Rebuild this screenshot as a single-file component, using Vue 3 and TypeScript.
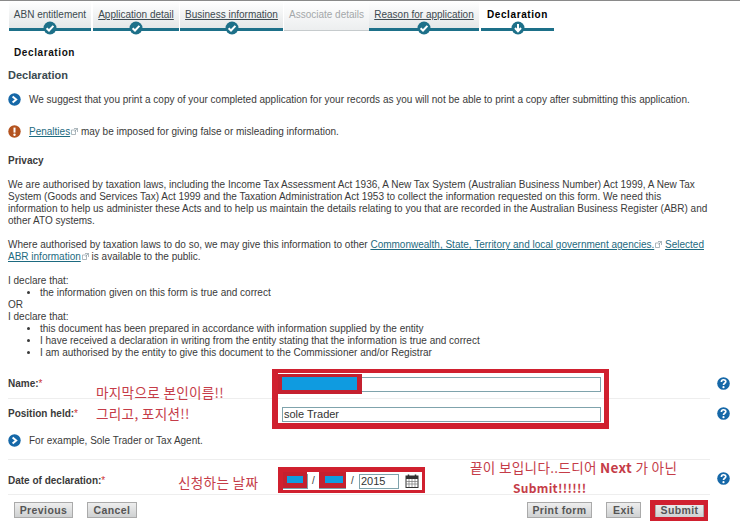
<script setup lang="ts">
interface Step {
  label: string;
  width: number;
  gap: number;
  state: 'done' | 'plain' | 'disabled' | 'current';
}

const steps: Step[] = [
  { label: 'ABN entitlement', width: 82, gap: 2, state: 'plain' },
  { label: 'Application detail', width: 86, gap: 1, state: 'done' },
  { label: 'Business information', width: 103, gap: 1, state: 'done' },
  { label: 'Associate details', width: 85, gap: 0, state: 'disabled' },
  { label: 'Reason for application', width: 110, gap: 2, state: 'done' },
  { label: 'Declaration', width: 73, gap: 0, state: 'current' },
];
</script>

<template>
  <div class="page">
    <nav class="steps">
      <div
        v-for="step in steps"
        :key="step.label"
        class="step"
        :class="step.state"
        :style="{ width: step.width + 'px', marginRight: step.gap + 'px' }"
      >
        <span class="step-label">{{ step.label }}</span>
        <svg v-if="step.state !== 'disabled'" class="step-icon" viewBox="0 0 14 14" width="14" height="14">
          <circle cx="7" cy="7" r="6.5" fill="#1d7089" />
          <path v-if="step.state === 'current'" d="M7 3v7M4 7l3 3.2L10 7" fill="none" stroke="#fff" stroke-width="2" />
          <path v-else d="M3.6 7.2l2.4 2.3 4.4-4.6" fill="none" stroke="#fff" stroke-width="2" />
        </svg>
      </div>
    </nav>

    <div class="page-title">Declaration</div>

    <main class="content">
      <h2 class="section-title">Declaration</h2>

      <div class="note first">
        <svg class="note-icon" viewBox="0 0 13 13" width="13" height="13">
          <circle cx="6.5" cy="6.5" r="6.2" fill="#1668a8" />
          <path d="M4.6 3.4l3.6 3.1-3.6 3.1" fill="none" stroke="#fff" stroke-width="2" />
        </svg>
        <span>We suggest that you print a copy of your completed application for your records as you will not be able to print a copy after submitting this application.</span>
      </div>

      <div class="note second">
        <svg class="note-icon" viewBox="0 0 13 13" width="13" height="13">
          <circle cx="6.5" cy="6.5" r="6.2" fill="#b4531f" />
          <path d="M6.5 2.6v5" fill="none" stroke="#fff" stroke-width="2" />
          <circle cx="6.5" cy="9.8" r="1.2" fill="#fff" />
        </svg>
        <span><a class="link">Penalties</a><svg class="ext" viewBox="0 0 7 7" width="7" height="7"><path d="M.5 2h4v4.5h-4zM3 .5h3.5V4M6.5.5L3.5 3.5" fill="none" stroke="#8a9aa0" stroke-width=".7" /></svg> may be imposed for giving false or misleading information.</span>
      </div>

      <h3 class="sub-title">Privacy</h3>

      <p class="para">We are authorised by taxation laws, including the Income Tax Assessment Act 1936, A New Tax System (Australian Business Number) Act 1999, A New Tax<br />System (Goods and Services Tax) Act 1999 and the Taxation Administration Act 1953 to collect the information requested on this form. We need this<br />information to help us administer these Acts and to help us maintain the details relating to you that are recorded in the Australian Business Register (ABR) and<br />other ATO systems.</p>

      <p class="para">Where authorised by taxation laws to do so, we may give this information to other <a class="link">Commonwealth, State, Territory and local government agencies.</a><svg class="ext" viewBox="0 0 7 7" width="7" height="7"><path d="M.5 2h4v4.5h-4zM3 .5h3.5V4M6.5.5L3.5 3.5" fill="none" stroke="#8a9aa0" stroke-width=".7" /></svg> <a class="link">Selected</a><br /><a class="link">ABR information</a><svg class="ext" viewBox="0 0 7 7" width="7" height="7"><path d="M.5 2h4v4.5h-4zM3 .5h3.5V4M6.5.5L3.5 3.5" fill="none" stroke="#8a9aa0" stroke-width=".7" /></svg> is available to the public.</p>

      <div class="para">
        I declare that:
        <ul>
          <li>the information given on this form is true and correct</li>
        </ul>
        OR<br />
        I declare that:
        <ul>
          <li>this document has been prepared in accordance with information supplied by the entity</li>
          <li>I have received a declaration in writing from the entity stating that the information is true and correct</li>
          <li>I am authorised by the entity to give this document to the Commissioner and/or Registrar</li>
        </ul>
      </div>

      <div class="form">
        <div class="row name-row">
          <label class="field-label">Name:<em>*</em></label>
          <input class="field" type="text" />
          <svg class="help" viewBox="0 0 13 13" width="13" height="13"><circle cx="6.5" cy="6.5" r="6.3" fill="#1668a8" /><path d="M4.4 5c0-3 4.4-2.8 4.4-.4 0 1.600-2.300 1.700-2.300 3.300" fill="none" stroke="#fff" stroke-width="1.700" /><circle cx="6.500" cy="10.200" r="1.100" fill="#fff" /></svg>
        </div>
        <div class="row position-row">
          <label class="field-label">Position held:<em>*</em></label>
          <input class="field" type="text" value="sole Trader" />
          <svg class="help" viewBox="0 0 13 13" width="13" height="13"><circle cx="6.5" cy="6.5" r="6.3" fill="#1668a8" /><path d="M4.4 5c0-3 4.4-2.8 4.4-.4 0 1.600-2.300 1.700-2.300 3.300" fill="none" stroke="#fff" stroke-width="1.700" /><circle cx="6.500" cy="10.200" r="1.100" fill="#fff" /></svg>
        </div>
        <div class="note example">
          <svg class="note-icon" viewBox="0 0 13 13" width="13" height="13">
            <circle cx="6.5" cy="6.5" r="6.2" fill="#1668a8" />
            <path d="M4.6 3.4l3.600 3.100-3.600 3.100" fill="none" stroke="#fff" stroke-width="2" />
          </svg>
          <span>For example, Sole Trader or Tax Agent.</span>
        </div>
        <div class="row date-row">
          <label class="field-label">Date of declaration:<em>*</em></label>
          <div class="date-fields">
            <input class="field day" type="text" />
            <span class="slash">/</span>
            <input class="field day second-day" type="text" />
            <span class="slash last">/</span>
            <input class="field year" type="text" value="2015" />
            <svg class="calendar" viewBox="0 0 14 14" width="14" height="14">
              <rect x="1" y="2" width="12" height="11.500" fill="#fff" stroke="#333" />
              <rect x="1" y="2" width="12" height="3" fill="#333" />
              <path d="M3.500 .5v3M10.500 .5v3" stroke="#333" stroke-width="1.500" />
              <path d="M1 7.500h12M1 10h12M4 5v8M7 5v8M10 5v8" stroke="#777" stroke-width=".7" />
            </svg>
          </div>
          <svg class="help" viewBox="0 0 13 13" width="13" height="13"><circle cx="6.5" cy="6.5" r="6.3" fill="#1668a8" /><path d="M4.4 5c0-3 4.4-2.8 4.4-.4 0 1.600-2.300 1.700-2.300 3.300" fill="none" stroke="#fff" stroke-width="1.700" /><circle cx="6.500" cy="10.200" r="1.100" fill="#fff" /></svg>
        </div>
      </div>

      <div class="actions">
        <button class="btn previous">Previous</button>
        <button class="btn cancel">Cancel</button>
        <span class="spacer"></span>
        <button class="btn print">Print form</button>
        <button class="btn exit">Exit</button>
        <button class="btn submit">Submit</button>
      </div>
    </main>

    <!-- annotations pasted over the form -->
    <div class="mark name-box"></div>
    <div class="mark name-fill"></div>
    <div class="mark date-box"></div>
    <div class="mark day-one"></div>
    <div class="mark day-two"></div>
    <div class="mark submit-box"></div>
    <div class="caption cap-name">마지막으로 본인이름!!</div>
    <div class="caption cap-position">그리고, 포지션!!</div>
    <div class="caption cap-date">신청하는 날짜</div>
    <div class="caption cap-next">끝이 보입니다..드디어 <b>Next</b> 가 아닌</div>
    <div class="caption cap-submit"><b>Submit!!!!!!</b></div>
  </div>
</template>

<style>
html,
body {
  margin: 0;
  background: #fff;
}
</style>

<style scoped>
.page {
  position: relative;
  width: 740px;
  height: 523px;
  overflow: hidden;
  background: #fff;
  color: #3a3a3a;
  font-family: "Liberation Sans", Arial, sans-serif;
  font-size: 10px;
  line-height: 12px;
  border-top: 1px solid #8a8a8a;
  box-sizing: border-box;
}

.steps {
  display: flex;
  padding-left: 9px;
  height: 35px;
}

.step {
  position: relative;
  box-sizing: border-box;
  height: 30px;
  padding-top: 8px;
  text-align: center;
  white-space: nowrap;
  background: linear-gradient(#fff, #e4e7e8);
  border-bottom: 3px solid #1d7089;
  color: #3d4a50;
}

.step.done .step-label {
  text-decoration: underline;
}

.step.disabled {
  color: #a4a8aa;
  border-bottom: 1px solid #c6cbcd;
  background: linear-gradient(#fff, #eceeef);
}

.step.current {
  background: #fff;
  color: #000;
  font-weight: bold;
  letter-spacing: .6px;
}

.step-icon {
  position: absolute;
  left: 50%;
  bottom: -7px;
  margin-left: -7px;
}

.page-title {
  margin: 11px 0 0 14px;
  font-weight: bold;
  letter-spacing: .6px;
  color: #111;
}

.content {
  padding: 0 8px;
}

.section-title {
  margin: 10px 0 0;
  font-size: 11px;
  line-height: 13px;
  color: #3a4a50;
}

.note {
  display: flex;
  align-items: center;
  gap: 8px;
}

.note.first {
  margin-top: 11px;
}

.note.second {
  margin-top: 19px;
}

.note-icon {
  flex: none;
}

.note span {
  padding-top: 1px;
}

.link {
  color: #1d6a80;
  text-decoration: underline;
}

.ext {
  margin-left: 1px;
}

.sub-title {
  margin: 17px 0 0;
  font-size: 10px;
  line-height: 12px;
}

.para {
  margin: 12px 0 0;
  white-space: nowrap;
}

ul {
  margin: 0;
  padding-left: 32px;
}

.form {
  margin-top: 11px;
}

.row {
  position: relative;
  display: flex;
  align-items: center;
  width: 702px;
  box-sizing: border-box;
  border-bottom: 1px solid #eee;
}

.name-row {
  height: 29px;
}

.position-row {
  height: 30px;
  border-bottom: 0;
}

.date-row {
  height: 36px;
  padding-top: 8px;
  border-top: 1px solid #eee;
  margin-top: 12px;
}

.field-label {
  flex: none;
  width: 274px;
  font-weight: bold;
}

.field-label em {
  color: #c33;
  font-style: normal;
  font-weight: normal;
}

.field {
  box-sizing: border-box;
  width: 319px;
  height: 15px;
  padding: 0 1px;
  border: 1px solid #7fa3ac;
  font: 11px "Liberation Sans", Arial, sans-serif;
  color: #333;
  outline: none;
}

.help {
  position: absolute;
  right: -20px;
  top: 50%;
  margin-top: -7px;
}

.date-row .help {
  margin-top: -5px;
}

.example {
  margin-top: 5px;
}

.date-fields {
  display: flex;
  align-items: center;
}

.field.day {
  width: 26px;
}

.field.second-day {
  width: 27px;
}

.slash {
  width: 11px;
  text-align: center;
}

.slash.last {
  width: 13px;
}

.field.year {
  width: 40px;
}

.calendar {
  margin-left: 6px;
}

.actions {
  display: flex;
  align-items: center;
  gap: 14px;
  padding: 7px 6px 0;
  width: 702px;
  box-sizing: border-box;
}

.spacer {
  flex: 1;
}

.btn {
  box-sizing: border-box;
  height: 16px;
  padding: 0;
  border: 1px solid #aaa;
  background: linear-gradient(#eee, #cfd1d2);
  font: bold 10.5px "Liberation Sans", Arial, sans-serif;
  letter-spacing: .4px;
  color: #555;
}

.previous { width: 59px; }
.cancel { width: 50px; }
.print { width: 65px; }
.exit { width: 35px; }
.submit { width: 49px; }

.mark {
  position: absolute;
  box-sizing: border-box;
}

.name-box {
  left: 272px;
  top: 368px;
  width: 337px;
  height: 60px;
  border: solid #d0202f;
  border-width: 4px 5px 6px 6px;
}

.name-fill {
  left: 278px;
  top: 373px;
  width: 84px;
  height: 20px;
  background: #0f9be0;
  border: solid #c4202f;
  border-width: 3px 5px 4px 4px;
}

.date-box {
  left: 278px;
  top: 466px;
  width: 147px;
  height: 26px;
  border: solid #d0202f;
  border-width: 5px 3px 3px 5px;
}

.day-one,
.day-two {
  top: 471px;
  height: 16px;
  background: #0f9be0;
  border: solid #c4202f;
}

.day-one {
  left: 283px;
  width: 24px;
  border-width: 4px 4px 5px 4px;
}

.day-two {
  left: 319px;
  width: 27px;
  border-width: 4px 3px 5px 6px;
}

.submit-box {
  left: 650px;
  top: 499px;
  width: 58px;
  height: 21px;
  border: solid #d0202f;
  border-width: 5px 4px 4px 5px;
}

.caption {
  position: absolute;
  font-family: "Noto Sans CJK KR", sans-serif;
  font-size: 13.6px;
  line-height: 16px;
  color: #c53c48;
  white-space: nowrap;
  letter-spacing: .3px;
}

.cap-name {
  left: 96px;
  top: 383px;
}

.cap-position {
  left: 96px;
  top: 404px;
}

.cap-date {
  left: 178px;
  top: 473px;
}

.cap-next {
  left: 470px;
  top: 458px;
}

.cap-submit {
  left: 513px;
  top: 479px;
  font-size: 12px;
}
</style>
